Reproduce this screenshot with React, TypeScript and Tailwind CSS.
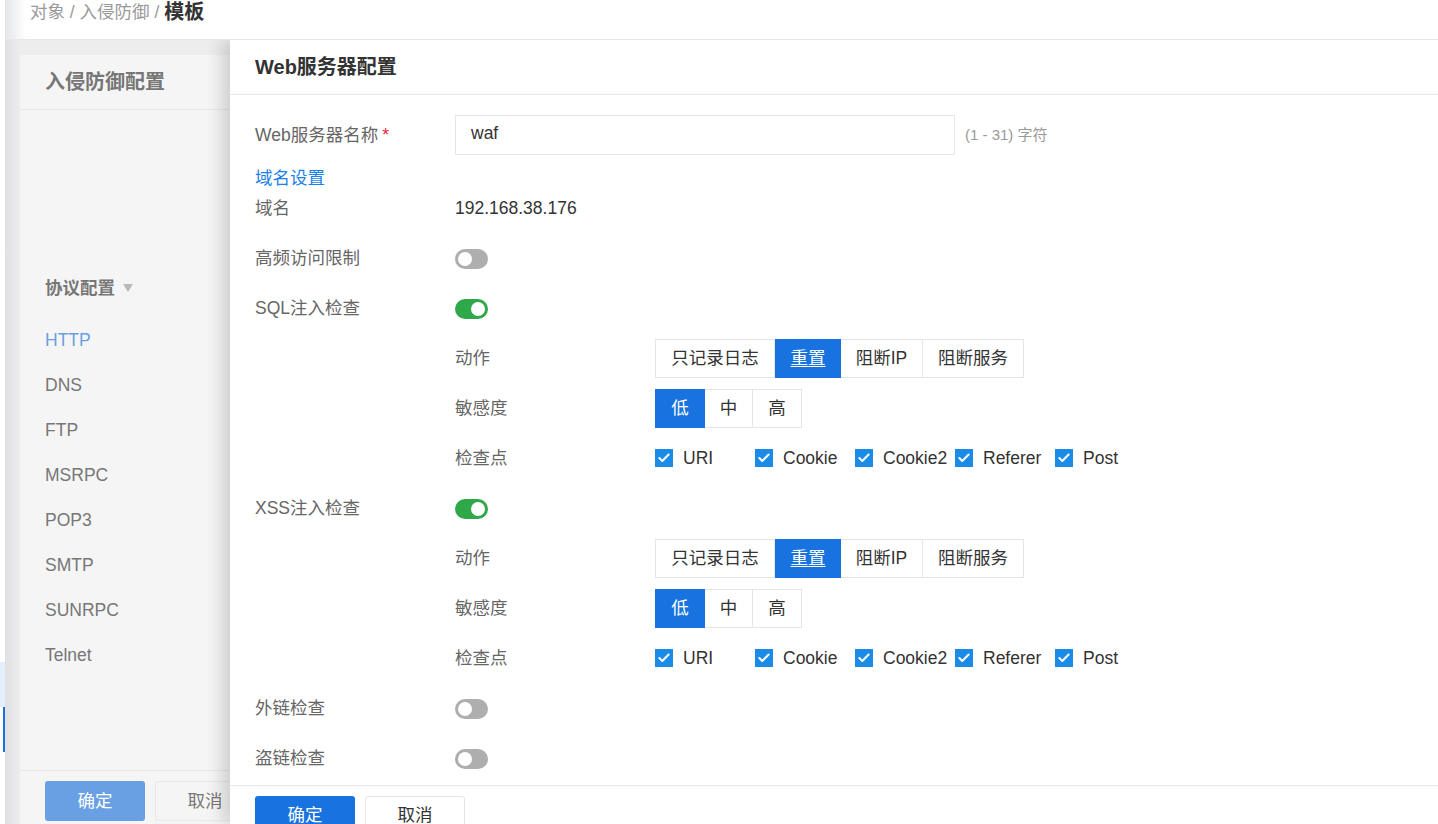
import { Check } from 'lucide-react';

const FONT = "font-['Liberation_Sans','Noto_Sans_CJK_SC',sans-serif]";
const protocols = ['HTTP', 'DNS', 'FTP', 'MSRPC', 'POP3', 'SMTP', 'SUNRPC', 'Telnet'];
const points = ['URI', 'Cookie', 'Cookie2', 'Referer', 'Post'];

function Toggle({ on }: { on?: boolean }) {
  return (
    <div className={`mt-[2px] flex h-5 w-[33px] items-center rounded-full px-[3px] ${on ? 'justify-end bg-[#2fa84a]' : 'justify-start bg-[#aeaeae]'}`}>
      <div className="size-[14px] rounded-full bg-white" />
    </div>
  );
}

function Row({ label, children }: { label: string; children?: React.ReactNode }) {
  return (
    <div className="flex h-[50px] items-center">
      <div className="w-[200px] shrink-0 text-[#666]">{label}</div>
      {children}
    </div>
  );
}

function SubRow({ label, children }: { label: string; children: React.ReactNode }) {
  return (
    <div className="flex h-[50px] items-center pl-[200px]">
      <div className="w-[200px] shrink-0 text-[#666]">{label}</div>
      {children}
    </div>
  );
}

function Segments({ items, active, widths }: { items: string[]; active: number; widths: string[] }) {
  return (
    <div className="flex h-[39px]">
      {items.map((item, i) => (
        <div
          key={item}
          className={`flex items-center justify-center ${widths[i]} ${
            i === active
              ? 'bg-[#1873e0] text-white'
              : `border-y border-r border-[#e6e6e6] text-[#333] ${i === 0 ? 'border-l' : ''}`
          }`}
        >
          <span className={item === '重置' ? 'underline underline-offset-2' : ''}>{item}</span>
        </div>
      ))}
    </div>
  );
}

function InspectGroup() {
  return (
    <>
      <SubRow label="动作">
        <Segments
          items={['只记录日志', '重置', '阻断IP', '阻断服务']}
          active={1}
          widths={['w-[120px]', 'w-[66px]', 'w-[82px]', 'w-[101px]']}
        />
      </SubRow>
      <SubRow label="敏感度">
        <Segments items={['低', '中', '高']} active={0} widths={['w-[50px]', 'w-[48px]', 'w-[49px]']} />
      </SubRow>
      <SubRow label="检查点">
        <div className="flex">
          {points.map((p) => (
            <div key={p} className="flex w-[100px] items-center gap-[10px] text-[#333]">
              <div className="flex size-[18px] items-center justify-center bg-[#1a8ce8]">
                <Check className="size-[14px] text-white" strokeWidth={3.5} />
              </div>
              <span className="whitespace-nowrap">{p}</span>
            </div>
          ))}
        </div>
      </SubRow>
    </>
  );
}

export default function App() {
  return (
    <div className={`flex h-[824px] w-full overflow-hidden bg-white text-[17.5px] ${FONT}`}>
      {/* 左侧导航边缘 */}
      <div className="flex w-[5px] shrink-0 flex-col bg-white pt-[662px]">
        <div className="h-[45px] bg-[#e3effc]" />
        <div className="ml-[3px] h-[45px] w-[2px] bg-[#1873e0]" />
      </div>

      <div className="flex min-w-0 flex-1 flex-col">
        {/* 面包屑 */}
        <div className="flex h-10 shrink-0 items-start border-b border-[#e8e8e8] bg-gradient-to-r from-[#e4e5e7] from-0% to-white to-[20px] pl-[25px] pt-px leading-[22px] text-[#999]">
          <span>对象 / 入侵防御 / </span>
          <span className="ml-[5px] text-[20px] font-bold text-[#333]">模板</span>
        </div>

        <div className="flex min-h-0 flex-1 overflow-hidden">
          {/* 入侵防御配置 */}
          <div className="w-[225px] shrink-0 bg-gradient-to-r from-[#dfe0e2] to-[#ededee] to-[15px] pl-[15px] pt-[15px]">
            <div className="flex h-full flex-col bg-[#f5f5f5]">
              <div className="flex h-[55px] shrink-0 items-center border-b border-[#e8e8e8] pl-[25px] text-[20px] font-bold text-[#777]">
                入侵防御配置
              </div>
              <div className="flex flex-1 flex-col pl-[25px] pt-[165px]">
                <div className="flex items-center gap-2 font-bold text-[#777]">
                  协议配置
                  <svg viewBox="0 0 10 8" className="h-[8px] w-[10px] fill-[#bbb]">
                    <path d="M0 0h10L5 8z" />
                  </svg>
                </div>
                <div className="mt-4 flex flex-col">
                  {protocols.map((p, i) => (
                    <div key={p} className={`flex h-[45px] items-center ${i === 0 ? 'text-[#6a9fe0]' : 'text-[#777]'}`}>
                      {p}
                    </div>
                  ))}
                </div>
              </div>
              <div className="flex h-[54px] shrink-0 gap-[10px] overflow-hidden border-t border-[#e8e8e8] pl-[25px] pt-[10px]">
                <div className="flex h-10 w-[100px] shrink-0 items-center justify-center rounded-[3px] bg-[#699fe3] text-white">确定</div>
                <div className="flex h-10 w-[100px] shrink-0 items-center justify-center rounded-[3px] border border-[#e8e8e8] text-[#777]">取消</div>
              </div>
            </div>
          </div>

          {/* Web服务器配置抽屉 */}
          <div className="z-10 flex min-w-0 flex-1 flex-col bg-white shadow-[-8px_0_16px_rgba(0,0,0,0.16)]">
            <div className="flex h-[55px] shrink-0 items-center border-b border-[#e8e8e8] pl-[25px] text-[20px] font-bold text-[#333]">
              Web服务器配置
            </div>
            <div className="h-[690px] shrink-0 overflow-hidden pl-[25px] pt-5">
              <div className="flex h-10 items-center">
                <div className="w-[200px] shrink-0 text-[#666]">
                  Web服务器名称<span className="ml-1 text-[#e8243c]">*</span>
                </div>
                <input
                  readOnly
                  value="waf"
                  className="h-10 w-[500px] border border-[#e6e6e6] px-[15px] pb-1 text-[#333] outline-none"
                />
                <span className="ml-[10px] text-[15px] text-[#999]">(1 - 31) 字符</span>
              </div>
              <div className="mt-[11px] flex h-6 items-center text-[#1a82e8]">域名设置</div>
              <div className="mt-[6px] flex h-[24px] items-center">
                <div className="w-[200px] shrink-0 text-[#666]">域名</div>
                <span className="text-[#333]">192.168.38.176</span>
              </div>
              <div className="h-[13px]" />
              <Row label="高频访问限制"><Toggle /></Row>
              <Row label="SQL注入检查"><Toggle on /></Row>
              <InspectGroup />
              <Row label="XSS注入检查"><Toggle on /></Row>
              <InspectGroup />
              <Row label="外链检查"><Toggle /></Row>
              <Row label="盗链检查"><Toggle /></Row>
            </div>
            <div className="flex shrink-0 gap-[10px] border-t border-[#e8e8e8] pl-[25px] pt-[10px]">
              <div className="flex h-10 w-[100px] items-center justify-center rounded-[3px] bg-[#1873e0] pb-[2px] text-white">确定</div>
              <div className="flex h-10 w-[100px] items-center justify-center rounded-[3px] border border-[#e6e6e6] pb-[2px] text-[#333]">取消</div>
            </div>
          </div>
        </div>
      </div>
    </div>
  );
}
